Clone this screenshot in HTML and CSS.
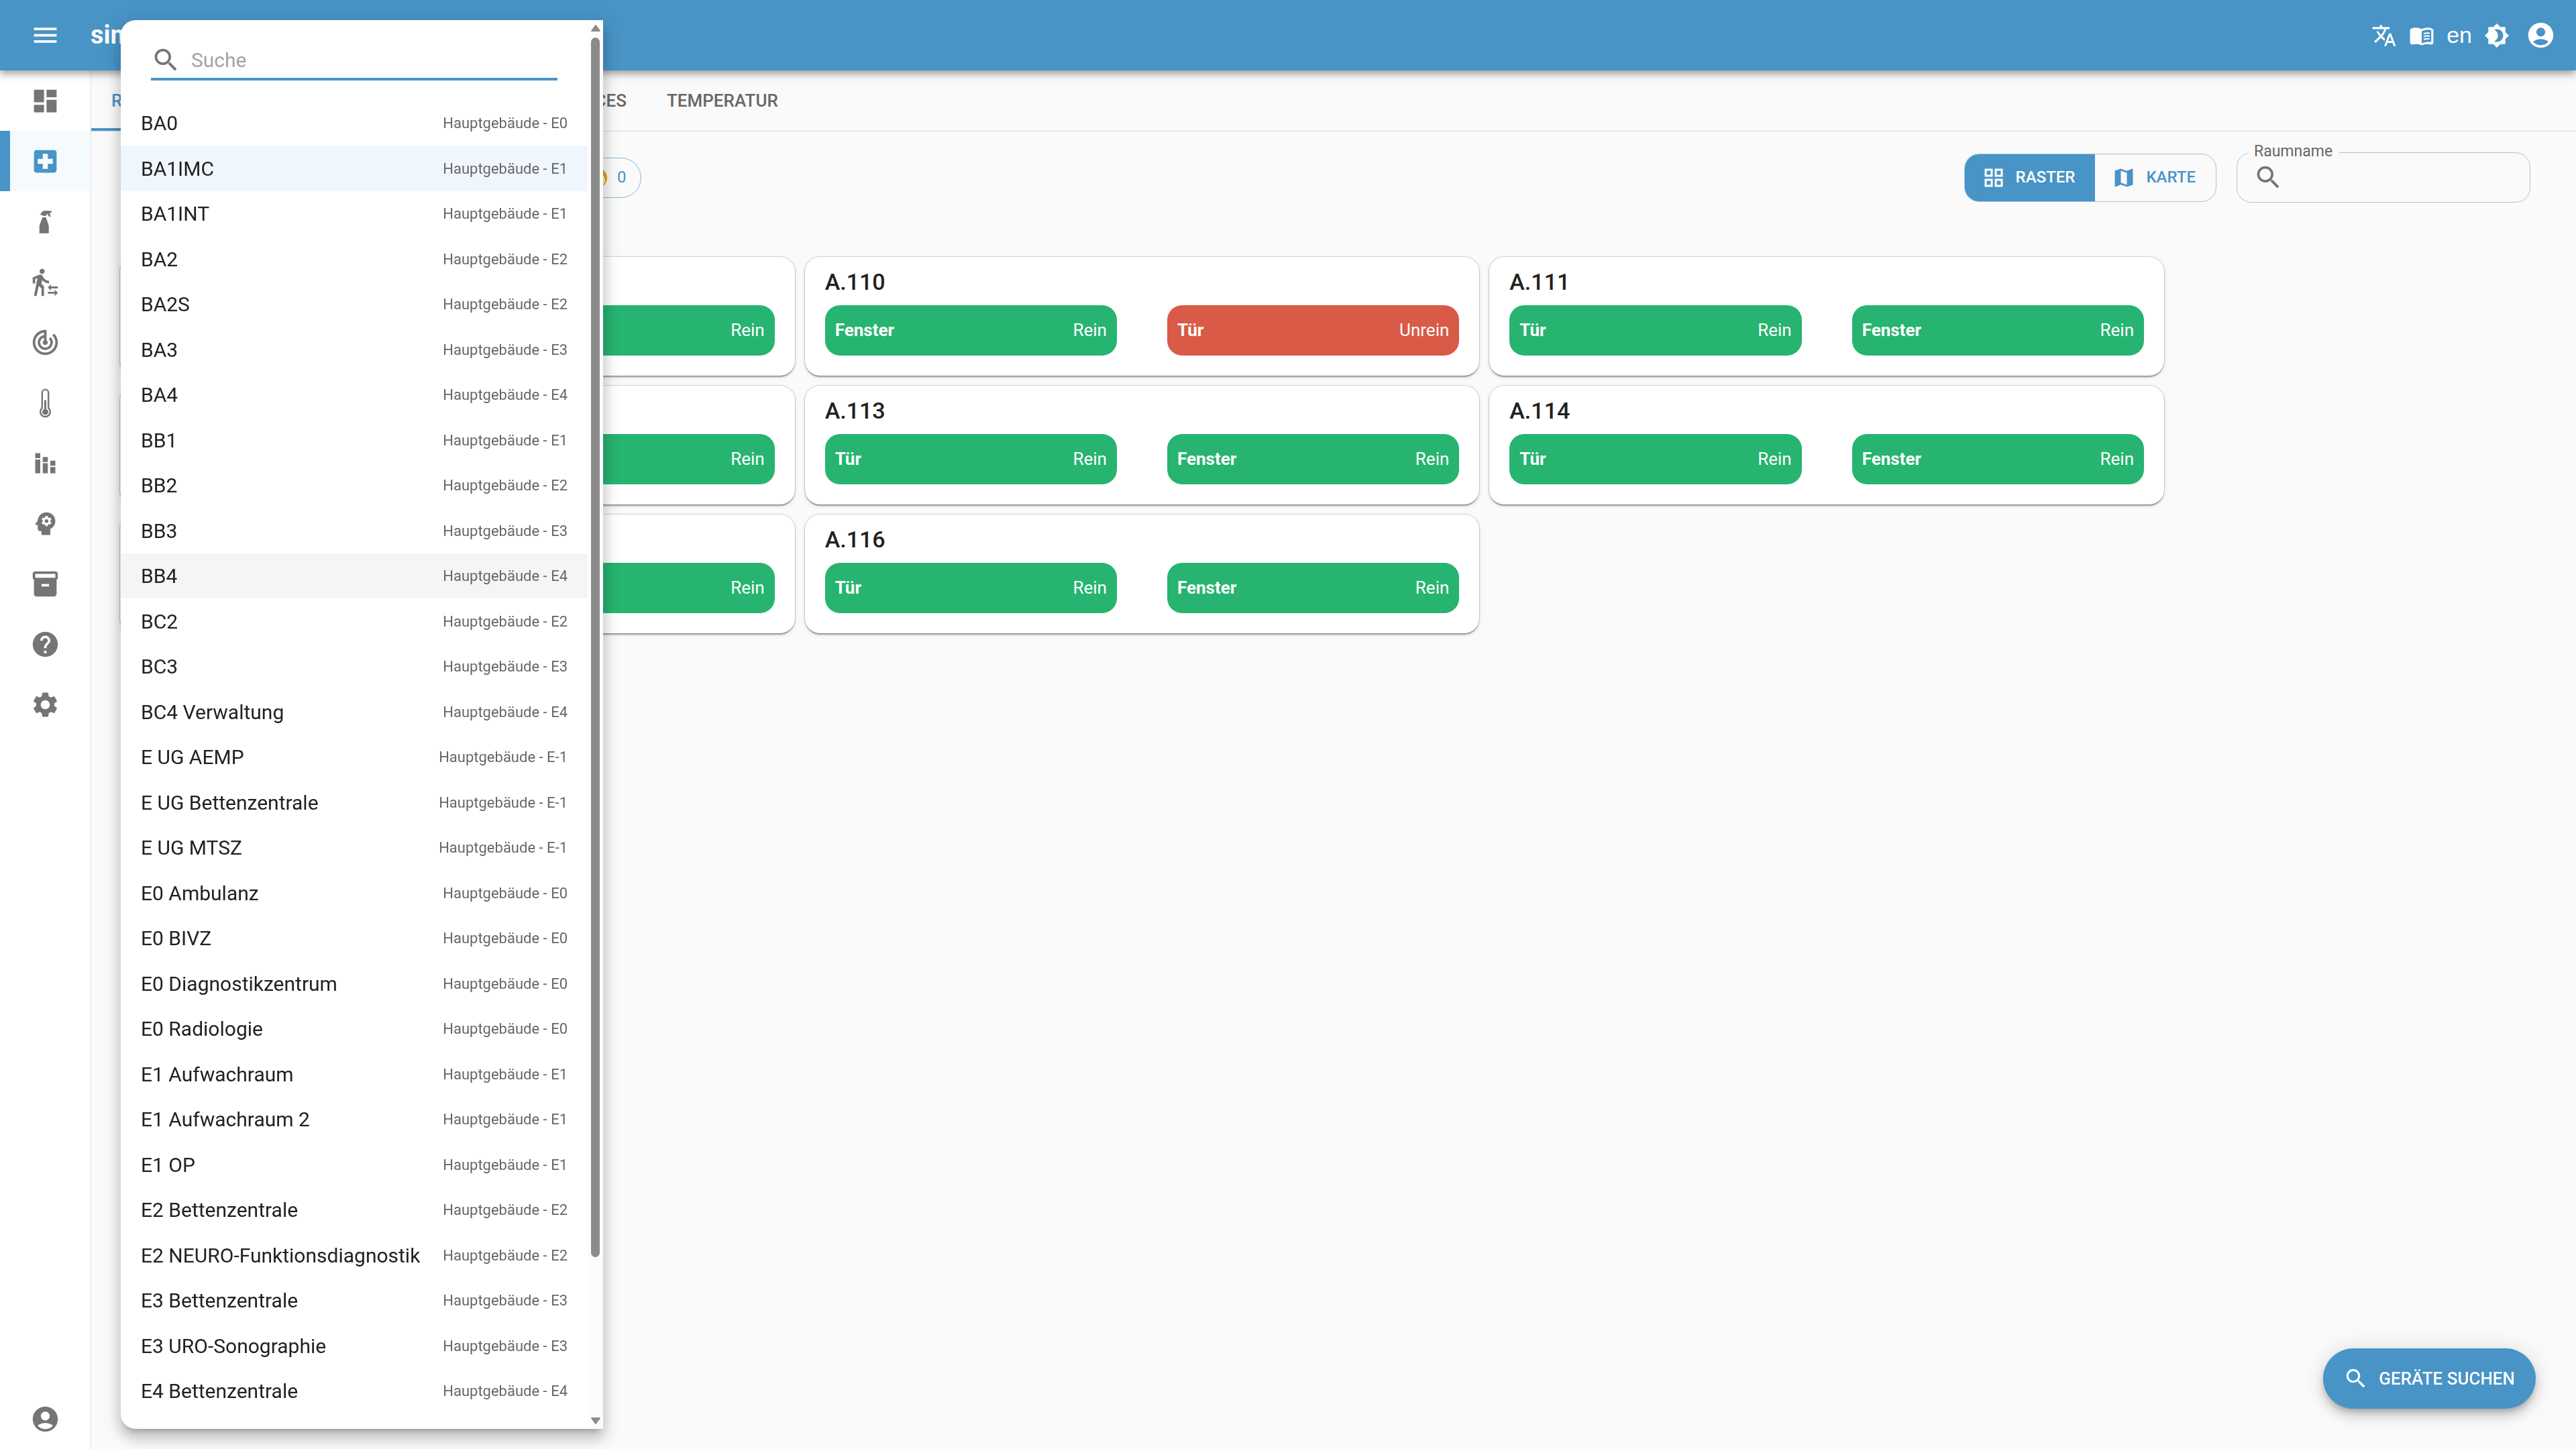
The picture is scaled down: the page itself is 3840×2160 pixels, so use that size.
FILE: index.html
```html
<!DOCTYPE html>
<html lang="de">
<head>
	<meta charset="UTF-8">
	<meta name="viewport" content="width=device-width, initial-scale=1.0">
	<title>Räume</title>
	<link rel="stylesheet" href="styles.css">
</head>
<body>
	<header class="topbar">
		<button class="topbar__button topbar__menu" aria-label="Menü">
			<svg class="icon" viewBox="0 0 24 24"><path d="M3 18h18v-2H3v2zm0-5h18v-2H3v2zm0-7v2h18V6H3z"/></svg>
		</button>
		<span class="topbar__brand">sim</span>
		<nav class="topbar__actions" aria-label="Konto">
			<button class="topbar__button" aria-label="Übersetzen">
				<svg class="icon icon--md" viewBox="0 0 24 24"><path d="M12.87 15.07l-2.54-2.51.03-.03c1.74-1.94 2.98-4.17 3.71-6.53H17V4h-7V2H8v2H1v1.99h11.17C11.5 7.92 10.44 9.75 9 11.35 8.07 10.32 7.3 9.19 6.69 8h-2c.73 1.63 1.73 3.17 2.98 4.56l-5.09 5.02L4 19l5-5 3.11 3.11.76-2.04zM18.5 10h-2L12 22h2l1.12-3h4.75L21 22h2l-4.5-12zm-2.62 7l1.62-4.33L19.12 17h-3.24z"/></svg>
			</button>
			<button class="topbar__button" aria-label="Handbuch">
				<svg class="icon icon--md" viewBox="0 0 24 24"><path d="M17.5 4.5c-1.95 0-4.05.4-5.5 1.5-1.45-1.1-3.55-1.5-5.5-1.5-1.45 0-2.99.22-4.28.79C1.49 5.62 1 6.33 1 7.14v11.28c0 1.3 1.22 2.26 2.48 1.94.98-.25 2.02-.36 3.02-.36 1.56 0 3.22.26 4.56.92.6.3 1.28.3 1.87 0 1.34-.67 3-.92 4.56-.92 1 0 2.04.11 3.02.36 1.26.33 2.48-.63 2.48-1.94V7.14c0-.81-.49-1.52-1.22-1.85-1.28-.57-2.82-.79-4.27-.79zM21 17.23c0 .63-.58 1.09-1.2.98-.75-.14-1.53-.2-2.3-.2-1.7 0-4.15.65-5.5 1.5V8c1.35-.85 3.8-1.5 5.5-1.5.92 0 1.83.09 2.7.28.46.1.8.51.8.98v9.47z"/><path class="icon__line" d="M13.9 10.3c1.7-.7 3.7-.9 5.6-.5M13.9 13c1.7-.7 3.7-.9 5.6-.5M13.9 15.7c1.7-.7 3.7-.9 5.6-.5"/></svg>
			</button>
			<button class="topbar__button topbar__lang">en</button>
			<button class="topbar__button" aria-label="Design wechseln">
				<svg class="icon icon--md" viewBox="0 0 24 24"><path d="M20 8.69V4h-4.69L12 .69 8.69 4H4v4.69L.69 12 4 15.31V20h4.69L12 23.31 15.31 20H20v-4.69L23.31 12 20 8.69zM12 18c-.89 0-1.74-.2-2.5-.55C11.56 16.5 13 14.42 13 12s-1.44-4.5-3.5-5.45C10.26 6.2 11.11 6 12 6c3.31 0 6 2.69 6 6s-2.69 6-6 6z"/></svg>
			</button>
			<button class="topbar__button topbar__account" aria-label="Profil">
				<svg class="icon" viewBox="0 0 24 24"><path d="M12 2C6.48 2 2 6.48 2 12s4.48 10 10 10 10-4.48 10-10S17.52 2 12 2zm0 4c1.93 0 3.5 1.57 3.5 3.5S13.93 13 12 13s-3.5-1.57-3.5-3.5S10.07 6 12 6zm0 14c-2.03 0-4.43-.82-6.14-2.88C7.55 15.8 9.68 15 12 15s4.45.8 6.14 2.12C16.43 19.18 14.03 20 12 20z"/></svg>
			</button>
		</nav>
	</header>

	<div class="layout">
		<nav class="sidebar" aria-label="Hauptmenü">
			<a class="sidebar__item" href="#dashboard" aria-label="Dashboard">
				<svg class="icon" viewBox="0 0 24 24"><path d="M3 13h8V3H3v10zm0 8h8v-6H3v6zm10 0h8V11h-8v10zm0-18v6h8V3h-8z"/></svg>
			</a>
			<a class="sidebar__item sidebar__item--active" href="#stationen" aria-label="Stationen">
				<svg class="icon" viewBox="0 0 24 24"><path d="M19 3H5c-1.1 0-1.99.9-1.99 2L3 19c0 1.1.9 2 2 2h14c1.1 0 2-.9 2-2V5c0-1.1-.9-2-2-2zm-1 11h-4v4h-4v-4H6v-4h4V6h4v4h4v4z"/></svg>
			</a>
			<a class="sidebar__item" href="#reinigung" aria-label="Reinigung">
				<svg class="icon" viewBox="0 0 24 24"><path d="M7.5 6.7l2.4-3 1.6-.5 5.5.2v1.1l-1.5.7.8 3-1.4-.4-1.2-1.8h-.8l-.1 1.3H9.6l-.2-.9zM9.7 8.5h2.9l2.2 6.8v5.9H7.3v-5.9z"/></svg>
			</a>
			<a class="sidebar__item" href="#transfer" aria-label="Transfer">
				<svg class="icon" viewBox="0 0 24 24"><path d="M16.49 15.5v-1.75L14 16.25l2.49 2.5V17H22v-1.5zM19.51 19.75H14v1.5h5.51V23L22 20.5 19.51 18v1.75zM9.5 5.5c1.1 0 2-.9 2-2s-.9-2-2-2-2 .9-2 2 .9 2 2 2zM5.75 8.9L3 23h2.1l1.75-8L9 17v6h2v-7.55L8.95 13.4l.6-3C10.85 12 12.8 13 15 13v-2c-1.85 0-3.45-1-4.35-2.45l-.95-1.6C9.35 6.35 8.7 6 8 6c-.25 0-.5.05-.75.15L2 8.3V13h2V9.65l1.75-.75"/></svg>
			</a>
			<a class="sidebar__item" href="#ortung" aria-label="Ortung">
				<svg class="icon" viewBox="0 0 24 24"><path d="M19.07 4.93l-1.41 1.41C19.1 7.79 20 9.79 20 12c0 4.42-3.58 8-8 8s-8-3.58-8-8c0-4.08 3.05-7.44 7-7.93v2.02C8.16 6.57 6 9.03 6 12c0 3.31 2.69 6 6 6s6-2.69 6-6c0-1.66-.67-3.16-1.76-4.24l-1.41 1.41C15.55 9.9 16 10.9 16 12c0 2.21-1.79 4-4 4s-4-1.79-4-4c0-1.86 1.28-3.41 3-3.86v2.14c-.6.35-1 .98-1 1.72 0 1.1.9 2 2 2s2-.9 2-2c0-.74-.4-1.38-1-1.72V2h-1C6.48 2 2 6.48 2 12s4.48 10 10 10 10-4.48 10-10c0-2.76-1.12-5.26-2.93-7.07z"/></svg>
			</a>
			<a class="sidebar__item" href="#temperatur" aria-label="Temperatur">
				<svg class="icon" viewBox="0 0 24 24"><path class="icon__line" d="M9.5 3.9a2.5 2.5 0 0 1 5 0v12.2a3.9 3.9 0 1 1-5 0z"/><path d="M11.2 9.8h1.6v7.2a2.4 2.4 0 1 1-1.6 0z"/></svg>
			</a>
			<a class="sidebar__item" href="#statistik" aria-label="Statistik">
				<svg class="icon" viewBox="0 0 24 24"><path d="M4 4h4v4H4zM4 9h4v11H4zM10 7h4v4h-4zM10 12h4v8h-4zM16 10h4v4h-4zM16 15h4v5h-4z"/></svg>
			</a>
			<a class="sidebar__item" href="#regeln" aria-label="Regeln">
				<svg class="icon" viewBox="0 0 24 24"><path d="M13 8.57c-.79 0-1.43.64-1.43 1.43s.64 1.43 1.43 1.43 1.43-.64 1.43-1.43-.64-1.43-1.43-1.43z"/><path d="M13 3C9.25 3 6.2 5.94 6.02 9.64L4.1 12.2c-.25.33-.01.8.4.8H6v3c0 1.1.9 2 2 2h1v3h7v-4.68c2.36-1.12 4-3.53 4-6.32 0-3.87-3.13-7-7-7zm3 7c0 .13-.01.26-.02.39l.83.66c.08.06.1.16.05.25l-.8 1.39c-.05.09-.16.12-.24.09l-.99-.4c-.21.16-.43.29-.67.39L14 13.83c-.01.1-.1.17-.2.17h-1.6c-.1 0-.18-.07-.2-.17l-.15-1.06c-.25-.1-.47-.23-.68-.39l-.99.4c-.09.03-.2 0-.25-.09l-.8-1.39c-.05-.08-.03-.19.05-.25l.84-.66c-.01-.13-.02-.26-.02-.39s.02-.27.04-.39l-.85-.66c-.08-.06-.1-.16-.05-.26l.8-1.38c.05-.09.15-.12.24-.09l1 .4c.2-.15.43-.29.67-.39L12 6.17c.02-.1.1-.17.2-.17h1.6c.1 0 .18.07.2.17l.15 1.06c.24.1.46.23.67.39l1-.4c.09-.03.2 0 .24.09l.8 1.38c.05.09.03.2-.05.26l-.85.66c.03.12.04.25.04.39z"/></svg>
			</a>
			<a class="sidebar__item" href="#inventar" aria-label="Inventar">
				<svg class="icon" viewBox="0 0 24 24"><path d="M20 2H4c-1 0-2 .9-2 2v3.01c0 .72.43 1.34 1 1.69V20c0 1.1 1.1 2 2 2h14c.9 0 2-.9 2-2V8.7c.57-.35 1-.97 1-1.69V4c0-1.1-1-2-2-2zm-5 12H9v-2h6v2zm5-7H4V4l16-.02V7z"/></svg>
			</a>
			<a class="sidebar__item" href="#hilfe" aria-label="Hilfe">
				<svg class="icon" viewBox="0 0 24 24"><path d="M12 2C6.48 2 2 6.48 2 12s4.48 10 10 10 10-4.48 10-10S17.52 2 12 2zm1 17h-2v-2h2v2zm2.07-7.75l-.9.92C13.45 12.9 13 13.5 13 15h-2v-.5c0-1.1.45-2.1 1.17-2.83l1.24-1.26c.37-.36.59-.86.59-1.41 0-1.1-.9-2-2-2s-2 .9-2 2H8c0-2.21 1.79-4 4-4s4 1.79 4 4c0 .88-.36 1.68-.93 2.25z"/></svg>
			</a>
			<a class="sidebar__item" href="#einstellungen" aria-label="Einstellungen">
				<svg class="icon" viewBox="0 0 24 24"><path d="M19.14 12.94c.04-.3.06-.61.06-.94 0-.32-.02-.64-.07-.94l2.03-1.58c.18-.14.23-.41.12-.61l-1.92-3.32c-.12-.22-.37-.29-.59-.22l-2.39.96c-.5-.38-1.03-.7-1.62-.94l-.36-2.54c-.04-.24-.24-.41-.48-.41h-3.84c-.24 0-.43.17-.47.41l-.36 2.54c-.59.24-1.13.57-1.62.94l-2.39-.96c-.22-.08-.47 0-.59.22L2.74 8.87c-.12.21-.08.47.12.61l2.03 1.58c-.05.3-.09.63-.09.94s.02.64.07.94l-2.03 1.58c-.18.14-.23.41-.12.61l1.92 3.32c.12.22.37.29.59.22l2.39-.96c.5.38 1.03.7 1.62.94l.36 2.54c.05.24.24.41.48.41h3.84c.24 0 .44-.17.47-.41l.36-2.54c.59-.24 1.13-.56 1.62-.94l2.39.96c.22.08.47 0 .59-.22l1.92-3.32c.12-.22.07-.47-.12-.61l-2.01-1.58zM12 15.6c-1.98 0-3.6-1.62-3.6-3.6s1.62-3.6 3.6-3.6 3.6 1.62 3.6 3.6-1.62 3.6-3.6 3.6z"/></svg>
			</a>
			<a class="sidebar__item sidebar__item--bottom" href="#profil" aria-label="Profil">
				<svg class="icon" viewBox="0 0 24 24"><path d="M12 2C6.48 2 2 6.48 2 12s4.48 10 10 10 10-4.48 10-10S17.52 2 12 2zm0 4c1.93 0 3.5 1.57 3.5 3.5S13.93 13 12 13s-3.5-1.57-3.5-3.5S10.07 6 12 6zm0 14c-2.03 0-4.43-.82-6.14-2.88C7.55 15.8 9.68 15 12 15s4.45.8 6.14 2.12C16.43 19.18 14.03 20 12 20z"/></svg>
			</a>
		</nav>

		<main class="content">
			<div class="tabs" role="tablist">
				<button class="tab tab--wide tab--active" role="tab" aria-selected="true">RÄUME</button>
				<button class="tab tab--wide" role="tab">BETTEN</button>
				<button class="tab tab--wide tab--end" role="tab">DEVICES</button>
				<button class="tab" role="tab">TEMPERATUR</button>
			</div>

			<div class="toolbar">
				<div class="toolbar__filters">
					<button class="chip">
						<svg class="chip__icon" viewBox="0 0 24 24"><circle cx="12" cy="12" r="12"/><path class="chip__mark" d="M12 5c5 1 8 5 9 12M8 15c5-3 10-2 12 4"/></svg>
						0
					</button>
				</div>
				<div class="toggle">
					<button class="toggle__button toggle__button--active" aria-pressed="true">
						<svg class="icon icon--sm" viewBox="0 0 24 24"><path d="M3 3v8h8V3H3zm6 6H5V5h4v4zm-6 4v8h8v-8H3zm6 6H5v-4h4v4zm4-16v8h8V3h-8zm6 6h-4V5h4v4zm-6 4v8h8v-8h-8zm6 6h-4v-4h4v4z"/></svg>
						RASTER
					</button>
					<button class="toggle__button" aria-pressed="false">
						<svg class="icon icon--sm" viewBox="0 0 24 24"><path d="M20.5 3l-.16.03L15 5.1 9 3 3.36 4.9c-.21.07-.36.25-.36.48V20.5c0 .28.22.5.5.5l.16-.03L9 18.9l6 2.1 5.64-1.9c.21-.07.36-.25.36-.48V3.5c0-.28-.22-.5-.5-.5zM15 19l-6-2.11V5l6 2.11V19z"/></svg>
						KARTE
					</button>
				</div>
				<div class="field">
					<label class="field__label" for="room-name">Raumname</label>
					<svg class="icon" viewBox="0 0 24 24"><path d="M15.5 14h-.79l-.28-.27C15.41 12.59 16 11.11 16 9.5 16 5.91 13.09 3 9.5 3S3 5.91 3 9.5 5.91 16 9.5 16c1.61 0 3.09-.59 4.23-1.57l.27.28v.79l5 4.99L20.49 19l-4.99-5zm-6 0C7.01 14 5 11.99 5 9.5S7.01 5 9.5 5 14 7.01 14 9.5 11.99 14 9.5 14z"/></svg>
					<input class="field__input" id="room-name" type="text">
				</div>
			</div>

			<div class="rooms">
				<article class="card">
					<h2 class="card__title">A.109</h2>
					<div class="card__states">
						<div class="state"><b>Tür</b><span>Rein</span></div>
						<div class="state"><b>Fenster</b><span>Rein</span></div>
					</div>
				</article>
				<article class="card">
					<h2 class="card__title">A.110</h2>
					<div class="card__states">
						<div class="state"><b>Fenster</b><span>Rein</span></div>
						<div class="state state--dirty"><b>Tür</b><span>Unrein</span></div>
					</div>
				</article>
				<article class="card">
					<h2 class="card__title">A.111</h2>
					<div class="card__states">
						<div class="state"><b>Tür</b><span>Rein</span></div>
						<div class="state"><b>Fenster</b><span>Rein</span></div>
					</div>
				</article>
				<article class="card">
					<h2 class="card__title">A.112</h2>
					<div class="card__states">
						<div class="state"><b>Tür</b><span>Rein</span></div>
						<div class="state"><b>Fenster</b><span>Rein</span></div>
					</div>
				</article>
				<article class="card">
					<h2 class="card__title">A.113</h2>
					<div class="card__states">
						<div class="state"><b>Tür</b><span>Rein</span></div>
						<div class="state"><b>Fenster</b><span>Rein</span></div>
					</div>
				</article>
				<article class="card">
					<h2 class="card__title">A.114</h2>
					<div class="card__states">
						<div class="state"><b>Tür</b><span>Rein</span></div>
						<div class="state"><b>Fenster</b><span>Rein</span></div>
					</div>
				</article>
				<article class="card">
					<h2 class="card__title">A.115</h2>
					<div class="card__states">
						<div class="state"><b>Tür</b><span>Rein</span></div>
						<div class="state"><b>Fenster</b><span>Rein</span></div>
					</div>
				</article>
				<article class="card">
					<h2 class="card__title">A.116</h2>
					<div class="card__states">
						<div class="state"><b>Tür</b><span>Rein</span></div>
						<div class="state"><b>Fenster</b><span>Rein</span></div>
					</div>
				</article>
			</div>
		</main>
	</div>

	<button class="fab">
		<svg class="icon icon--md" viewBox="0 0 24 24"><path d="M15.5 14h-.79l-.28-.27C15.41 12.59 16 11.11 16 9.5 16 5.91 13.09 3 9.5 3S3 5.91 3 9.5 5.91 16 9.5 16c1.61 0 3.09-.59 4.23-1.57l.27.28v.79l5 4.99L20.49 19l-4.99-5zm-6 0C7.01 14 5 11.99 5 9.5S7.01 5 9.5 5 14 7.01 14 9.5 11.99 14 9.5 14z"/></svg>
		GERÄTE SUCHEN
	</button>

	<!-- Station menu, open over the page -->
	<div class="menu">
		<div class="menu__body">
			<label class="menu__search">
				<svg class="icon" viewBox="0 0 24 24"><path d="M15.5 14h-.79l-.28-.27C15.41 12.59 16 11.11 16 9.5 16 5.91 13.09 3 9.5 3S3 5.91 3 9.5 5.91 16 9.5 16c1.61 0 3.09-.59 4.23-1.57l.27.28v.79l5 4.99L20.49 19l-4.99-5zm-6 0C7.01 14 5 11.99 5 9.5S7.01 5 9.5 5 14 7.01 14 9.5 11.99 14 9.5 14z"/></svg>
				<input class="menu__input" type="text" placeholder="Suche" aria-label="Suche">
			</label>
			<ul class="menu__list" role="listbox" aria-label="Station">
				<li class="option" role="option">BA0 <small>Hauptgebäude - E0</small></li>
				<li class="option option--selected" role="option" aria-selected="true">BA1IMC <small>Hauptgebäude - E1</small></li>
				<li class="option" role="option">BA1INT <small>Hauptgebäude - E1</small></li>
				<li class="option" role="option">BA2 <small>Hauptgebäude - E2</small></li>
				<li class="option" role="option">BA2S <small>Hauptgebäude - E2</small></li>
				<li class="option" role="option">BA3 <small>Hauptgebäude - E3</small></li>
				<li class="option" role="option">BA4 <small>Hauptgebäude - E4</small></li>
				<li class="option" role="option">BB1 <small>Hauptgebäude - E1</small></li>
				<li class="option" role="option">BB2 <small>Hauptgebäude - E2</small></li>
				<li class="option" role="option">BB3 <small>Hauptgebäude - E3</small></li>
				<li class="option option--hover" role="option">BB4 <small>Hauptgebäude - E4</small></li>
				<li class="option" role="option">BC2 <small>Hauptgebäude - E2</small></li>
				<li class="option" role="option">BC3 <small>Hauptgebäude - E3</small></li>
				<li class="option" role="option">BC4 Verwaltung <small>Hauptgebäude - E4</small></li>
				<li class="option" role="option">E UG AEMP <small>Hauptgebäude - E-1</small></li>
				<li class="option" role="option">E UG Bettenzentrale <small>Hauptgebäude - E-1</small></li>
				<li class="option" role="option">E UG MTSZ <small>Hauptgebäude - E-1</small></li>
				<li class="option" role="option">E0 Ambulanz <small>Hauptgebäude - E0</small></li>
				<li class="option" role="option">E0 BIVZ <small>Hauptgebäude - E0</small></li>
				<li class="option" role="option">E0 Diagnostikzentrum <small>Hauptgebäude - E0</small></li>
				<li class="option" role="option">E0 Radiologie <small>Hauptgebäude - E0</small></li>
				<li class="option" role="option">E1 Aufwachraum <small>Hauptgebäude - E1</small></li>
				<li class="option" role="option">E1 Aufwachraum 2 <small>Hauptgebäude - E1</small></li>
				<li class="option" role="option">E1 OP <small>Hauptgebäude - E1</small></li>
				<li class="option" role="option">E2 Bettenzentrale <small>Hauptgebäude - E2</small></li>
				<li class="option" role="option">E2 NEURO-Funktionsdiagnostik <small>Hauptgebäude - E2</small></li>
				<li class="option" role="option">E3 Bettenzentrale <small>Hauptgebäude - E3</small></li>
				<li class="option" role="option">E3 URO-Sonographie <small>Hauptgebäude - E3</small></li>
				<li class="option" role="option">E4 Bettenzentrale <small>Hauptgebäude - E4</small></li>
				<li class="option" role="option">Adm</li>
			</ul>
		</div>
		<div class="scrollbar" aria-hidden="true">
			<svg class="scrollbar__arrow" viewBox="0 0 16 12"><path d="M8 2l6 8H2z"/></svg>
			<div class="scrollbar__track"><div class="scrollbar__thumb"></div></div>
			<svg class="scrollbar__arrow" viewBox="0 0 16 12"><path d="M8 10l6-8H2z"/></svg>
		</div>
	</div>
</body>
</html>
```
FILE: styles.css
```css
* {
	box-sizing: border-box;
	margin: 0;
	padding: 0;
}

:root {
	--primary: #4894c6;
	--clean: #26b470;
	--dirty: #d85a47;
	--bg: #fafafa;
	--text: #212121;
	--muted: #666666;
	--icon: #757575;
	--radius: 22px;
}

body {
	display: flex;
	flex-direction: column;
	min-height: 100vh;
	background-color: var(--bg);
	color: var(--text);
	font-family: Roboto, "Liberation Sans", sans-serif;
	font-size: 30px;
	line-height: 45px;
}

button {
	appearance: none;
	border: 0;
	background: none;
	color: inherit;
	font: inherit;
	cursor: pointer;
}

.icon {
	display: block;
	flex-shrink: 0;
	width: 45px;
	height: 45px;
	fill: currentColor;
}

.icon--md {
	width: 38px;
	height: 38px;
}

.icon--sm {
	width: 36px;
	height: 36px;
}

.icon__line {
	fill: none;
	stroke: currentColor;
	stroke-width: 1.3;
}

/* Top bar */
.topbar {
	position: relative;
	z-index: 2;
	display: flex;
	align-items: center;
	height: 105px;
	padding-right: 30px;
	background-color: var(--primary);
	color: #ffffff;
	box-shadow: 0 4px 8px -2px rgba(0, 0, 0, 0.2), 0 8px 9px 0 rgba(0, 0, 0, 0.14), 0 2px 19px 0 rgba(0, 0, 0, 0.12);
}

.topbar__menu {
	padding: 0 45px;
}

.topbar__brand {
	font-size: 38px;
	font-weight: 700;
}

.topbar__actions {
	display: flex;
	align-items: center;
	gap: 18px;
	margin-left: auto;
}

.topbar__lang {
	font-family: "Liberation Sans", Arial, sans-serif;
	font-size: 34px;
}

.topbar__account {
	margin-left: 6px;
}

/* Sidebar */
.layout {
	display: flex;
	flex: 1;
}

.sidebar {
	display: flex;
	flex-direction: column;
	flex-shrink: 0;
	width: 136px;
	background-color: #ffffff;
	border-right: 1px solid #e0e0e0;
}

.sidebar__item {
	display: flex;
	align-items: center;
	justify-content: center;
	height: 90px;
	color: var(--icon);
}

.sidebar__item--active {
	padding-right: 15px;
	border-left: 15px solid var(--primary);
	background-color: #f5fafd;
	color: var(--primary);
}

.sidebar__item--bottom {
	margin-top: auto;
}

/* Tabs */
.content {
	flex: 1;
	min-width: 0;
}

.tabs {
	display: flex;
	height: 91px;
	border-bottom: 1px solid #dcdcdc;
}

.tab {
	padding: 0 30px;
	border-bottom: 4px solid transparent;
	border-top: 4px solid transparent;
	color: var(--muted);
	font-size: 26px;
	font-weight: 500;
	text-align: left;
}

.tab--wide {
	width: 276px;
}

.tab--active {
	border-bottom-color: var(--primary);
	color: var(--primary);
}

.tab--end {
	text-align: right;
}

/* Toolbar */
.toolbar {
	display: flex;
	align-items: center;
	gap: 30px;
	padding: 31px 68px 81px 43px;
}

.toolbar__filters {
	display: flex;
	flex: 1;
	padding-left: 674px;
}

.chip {
	display: flex;
	align-items: center;
	gap: 15px;
	height: 60px;
	padding: 0 21px;
	border: 1px solid #86b7d8;
	border-radius: 30px;
	color: var(--primary);
	font-size: 24px;
}

.chip__icon {
	width: 30px;
	height: 30px;
	fill: #dfa300;
}

.chip__mark {
	fill: none;
	stroke: #ffffff;
	stroke-width: 1.5;
}

.toggle {
	display: flex;
	height: 72px;
	border: 1px solid #9cc5df;
	border-radius: var(--radius);
	overflow: hidden;
}

.toggle__button {
	display: flex;
	align-items: center;
	gap: 15px;
	padding: 0 30px 0 25px;
	color: var(--primary);
	font-size: 24px;
	font-weight: 500;
}

.toggle__button--active {
	background-color: var(--primary);
	color: #ffffff;
}

.field {
	position: relative;
	display: flex;
	align-items: center;
	gap: 15px;
	width: 438px;
	height: 75px;
	padding: 0 24px;
	border: 1px solid #c0c0c0;
	border-radius: var(--radius);
	color: var(--icon);
}

.field__label {
	position: absolute;
	top: -15px;
	left: 15px;
	padding: 0 10px;
	background-color: var(--bg);
	color: var(--muted);
	font-size: 23px;
	line-height: 26px;
}

.field__input,
.menu__input {
	flex: 1;
	min-width: 0;
	border: 0;
	outline: 0;
	background: none;
	color: var(--text);
	font: inherit;
}

/* Room cards */
.rooms {
	display: grid;
	grid-template-columns: repeat(3, minmax(0, 1fr));
	gap: 15px;
	max-width: 3090px;
	padding-left: 43px;
}

.card {
	padding: 15px 30px 30px;
	background-color: #ffffff;
	border-radius: var(--radius);
	box-shadow: 0 4px 2px -2px rgba(0, 0, 0, 0.2), 0 2px 2px 0 rgba(0, 0, 0, 0.14), 0 2px 6px 0 rgba(0, 0, 0, 0.12), 0 0 0 1px rgba(0, 0, 0, 0.12);
}

.card__title {
	margin-bottom: 12px;
	font-size: 34px;
	font-weight: 500;
}

.card__states {
	display: grid;
	grid-template-columns: 1fr 1fr;
	gap: 75px;
}

.state {
	display: flex;
	align-items: center;
	justify-content: space-between;
	height: 75px;
	padding: 0 15px;
	border-radius: var(--radius);
	background-color: var(--clean);
	color: #ffffff;
	font-size: 26px;
}

.state--dirty {
	background-color: var(--dirty);
}

.fab {
	position: fixed;
	right: 60px;
	bottom: 60px;
	display: flex;
	align-items: center;
	gap: 15px;
	height: 90px;
	padding: 0 31px 0 30px;
	border-radius: 45px;
	background-color: var(--primary);
	color: #ffffff;
	font-size: 26px;
	font-weight: 500;
	box-shadow: 0 6px 9px -2px rgba(0, 0, 0, 0.2), 0 11px 19px 0 rgba(0, 0, 0, 0.14), 0 2px 34px 0 rgba(0, 0, 0, 0.12);
}

/* Station menu */
.menu {
	position: fixed;
	top: 30px;
	bottom: 30px;
	left: 180px;
	z-index: 3;
	display: flex;
	width: 719px;
	background-color: #ffffff;
	border-radius: var(--radius) 0 0 var(--radius);
	box-shadow: 0 9px 9px -6px rgba(0, 0, 0, 0.2), 0 15px 19px 2px rgba(0, 0, 0, 0.14), 0 6px 26px 4px rgba(0, 0, 0, 0.12);
	overflow: hidden;
}

.menu__body {
	flex: 1;
	overflow: hidden;
}

.menu__search {
	display: flex;
	align-items: center;
	gap: 15px;
	height: 58px;
	margin: 32px 45px 30px;
	border-bottom: 4px solid var(--primary);
	color: var(--icon);
}

.menu__input::placeholder {
	color: #a2a2a2;
}

.menu__list {
	list-style: none;
}

.option {
	display: flex;
	align-items: center;
	justify-content: space-between;
	height: 67px;
	padding: 0 30px;
	white-space: nowrap;
}

.option:nth-child(even) {
	height: 68px;
}

.option small {
	color: var(--muted);
	font-size: 22px;
}

.option--selected {
	background-color: #f0f6fd;
}

.option--hover {
	background-color: #f5f5f5;
}

.scrollbar {
	display: flex;
	flex-direction: column;
	align-items: center;
	gap: 8px;
	width: 23px;
	padding: 6px 0;
	background-color: #fcfcfc;
}

.scrollbar__arrow {
	width: 16px;
	height: 12px;
	fill: #8b8b8b;
	stroke: #8b8b8b;
	stroke-width: 2;
	stroke-linejoin: round;
}

.scrollbar__track {
	flex: 1;
}

.scrollbar__thumb {
	width: 13px;
	height: calc(100% - 230px);
	border-radius: 7px;
	background-color: #8b8b8b;
}
```
